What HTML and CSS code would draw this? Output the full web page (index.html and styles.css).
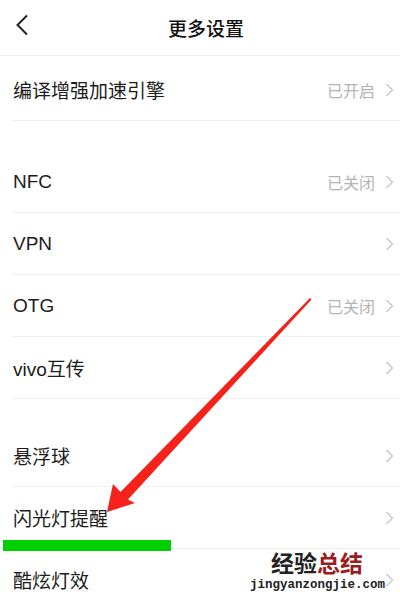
FILE: index.html
```html
<!DOCTYPE html>
<html lang="zh-CN">
<head>
  <meta charset="UTF-8" />
  <title>更多设置</title>
  <link rel="stylesheet" href="styles.css">
</head>
<body>

<div class="screen">
  <div class="header">
    <svg class="back" width="14" height="22" viewBox="0 0 14 22"><path d="M12 1.5 L2.5 11 L12 20.5" fill="none" stroke="#222" stroke-width="2"/></svg>
    <div class="title">更多设置</div>
  </div>

  <div class="group first">
    <div class="row"><span class="label">编译增强加速引擎</span><span class="value">已开启</span><svg class="chev" width="9" height="14" viewBox="0 0 9 14"><path d="M1.5 1 L7.5 7 L1.5 13" fill="none" stroke="#c6c6c6" stroke-width="1.3"/></svg></div>
  </div>

  <div class="group">
    <div class="row"><span class="label">NFC</span><span class="value">已关闭</span><svg class="chev" width="9" height="14" viewBox="0 0 9 14"><path d="M1.5 1 L7.5 7 L1.5 13" fill="none" stroke="#c6c6c6" stroke-width="1.3"/></svg></div>
    <div class="row"><span class="label">VPN</span><span class="value"></span><svg class="chev" width="9" height="14" viewBox="0 0 9 14"><path d="M1.5 1 L7.5 7 L1.5 13" fill="none" stroke="#c6c6c6" stroke-width="1.3"/></svg></div>
    <div class="row"><span class="label">OTG</span><span class="value">已关闭</span><svg class="chev" width="9" height="14" viewBox="0 0 9 14"><path d="M1.5 1 L7.5 7 L1.5 13" fill="none" stroke="#c6c6c6" stroke-width="1.3"/></svg></div>
    <div class="row"><span class="label">vivo互传</span><span class="value"></span><svg class="chev" width="9" height="14" viewBox="0 0 9 14"><path d="M1.5 1 L7.5 7 L1.5 13" fill="none" stroke="#c6c6c6" stroke-width="1.3"/></svg></div>
  </div>

  <div class="group second">
    <div class="row"><span class="label">悬浮球</span><span class="value"></span><svg class="chev" width="9" height="14" viewBox="0 0 9 14"><path d="M1.5 1 L7.5 7 L1.5 13" fill="none" stroke="#c6c6c6" stroke-width="1.3"/></svg></div>
    <div class="row"><span class="label">闪光灯提醒</span><span class="value"></span><svg class="chev" width="9" height="14" viewBox="0 0 9 14"><path d="M1.5 1 L7.5 7 L1.5 13" fill="none" stroke="#c6c6c6" stroke-width="1.3"/></svg></div>
    <div class="row"><span class="label">酷炫灯效</span><span class="value"></span><svg class="chev" width="9" height="14" viewBox="0 0 9 14"><path d="M1.5 1 L7.5 7 L1.5 13" fill="none" stroke="#c6c6c6" stroke-width="1.3"/></svg></div>
  </div>

  <!-- annotation overlays -->
  <svg class="arrow" width="400" height="601" viewBox="0 0 400 601">
    <polygon points="107,512 113,484 120.5,492 310,298 311.5,299.5 128,499.5 135,503" fill="#f5221b"/>
  </svg>
  <div class="mark"></div>
  <div class="watermark">
    <div class="wm-cn">经验<span class="wm-red">总结</span></div>
    <div class="wm-url">jingyanzongjie.com</div>
  </div>
</div>

</body>
</html>
```

FILE: styles.css
```css
body { margin: 0; background: #fff; font-family: "Liberation Sans", "Noto Sans CJK SC", sans-serif; }
.screen { position: relative; width: 400px; height: 601px; overflow: hidden; }

.header {
  position: relative;
  height: 55px;
  border-bottom: 1px solid #efefef;
  display: flex;
  align-items: center;
  justify-content: center;
}
.back { position: absolute; left: 15px; top: 14px; }
.title { font-size: 19px; font-weight: 500; color: #111; padding-left: 12px; font-family: "Noto Sans CJK SC", sans-serif; }

.group.first { margin-top: 3px; margin-bottom: 30px; }
.group.second { margin-top: 26px; }

.row {
  height: 61px;
  margin-left: 12px;
  border-bottom: 1px solid #f0f0f0;
  display: flex;
  align-items: center;
}
.label { font-size: 19px; color: #1c1c1c; padding-left: 1px; }
.value { margin-left: auto; font-size: 16px; color: #b4b4b4; margin-right: 10px; }
.chev { margin-right: 6px; }

.arrow { position: absolute; left: 0; top: 0; }
.mark {
  position: absolute;
  left: 3px;
  top: 540px;
  width: 168px;
  height: 11px;
  background: #00d000;
}
.watermark {
  position: absolute;
  left: 250px;
  top: 551px;
}
.wm-cn { font-family: "Noto Sans CJK SC", sans-serif; font-size: 23px; font-weight: 700; color: #222; line-height: 22px; padding-left: 21px; }
.wm-red { color: #9a1d1d; }
.wm-url { font-family: "Liberation Mono", monospace; font-size: 12.5px; font-weight: 700; color: #222; line-height: 12px; margin-top: 6px; }
```
